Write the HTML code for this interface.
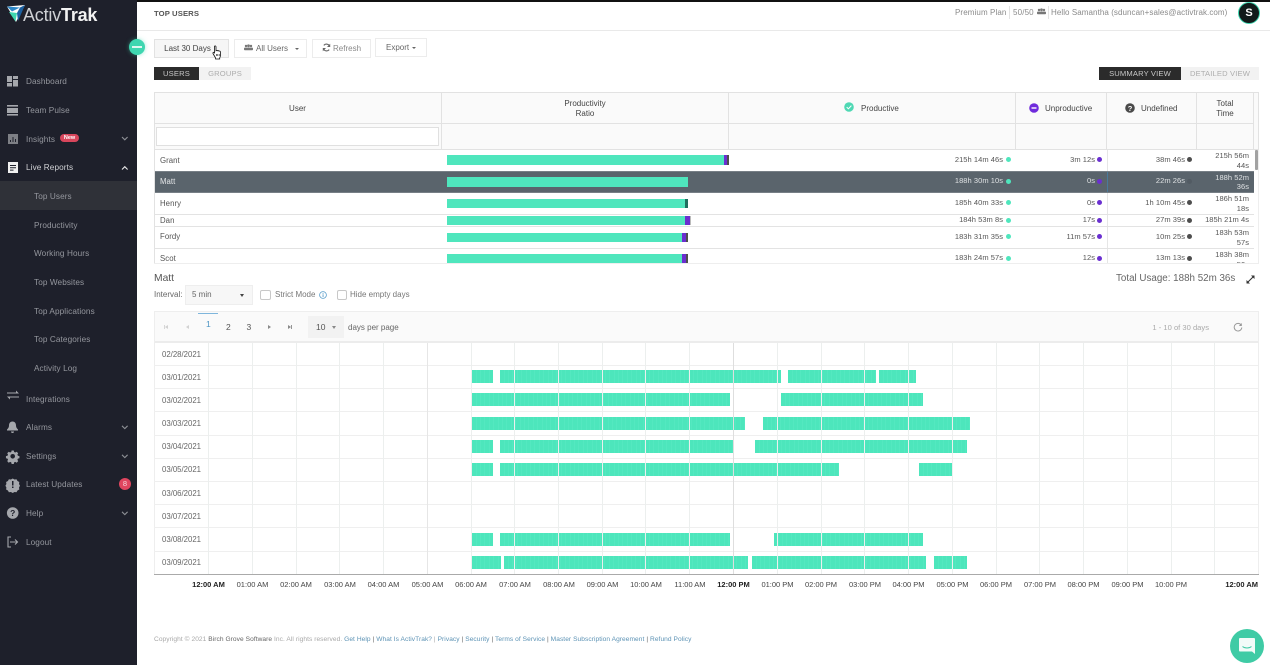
<!DOCTYPE html>
<html lang="en"><head><meta charset="utf-8"><title>Top Users</title>
<style>
html,body{margin:0;padding:0;width:1270px;height:665px;overflow:hidden;background:#fff}
body{font-family:"Liberation Sans",sans-serif;font-size:8px;color:#444;position:relative;filter:blur(.3px)}
div,span,a{position:absolute;white-space:nowrap;box-sizing:border-box}
span.i,a.i{position:static}
.c{text-align:center}
.side{left:0;top:0;width:137px;height:665px;background:#1e202b}
.n{left:26px;font-size:8.2px;color:#95979e;line-height:10px;letter-spacing:.1px}
.n2{left:34px}
.btn{height:19px;border:1px solid #ececec;background:#fff;line-height:17px;font-size:8px;color:#666;text-align:center}
.tab{height:13px;line-height:13px;font-size:7.6px;text-align:center;letter-spacing:.15px}
.hl{background:#e2e2e2}
.th{font-size:8px;color:#444;line-height:10px}
.cell{font-size:7.5px;color:#555;text-align:right;line-height:10px;letter-spacing:.05px}
.d{width:5px;height:5px;border-radius:50%}
.g{background:#4fe6bd}.p{background:#6a2fd0}.k{background:#4e4e4e}
.row{left:154px;width:1100px;height:1px;background:#e3e3e3}
.dt{left:162px;font-size:7.8px;color:#666;line-height:10px}
.rl{left:154px;width:1104px;height:1px;background:#efefef}
.b{height:13px;background:repeating-linear-gradient(90deg,#4de6bc 0 3.9px,#5ae9c4 3.9px 4.4px)}
.v{top:343px;width:1px;height:231px;background:#ecefee}
.t{width:60px;text-align:center;top:580px;font-size:7.5px;color:#444;line-height:10px}
.t b{color:#222}
.foot{left:154px;top:636px;font-size:6.6px;line-height:8px;color:#a8a8a8;letter-spacing:.06px}
.foot a.i{color:#5d93b5;text-decoration:none}
.foot span.i{color:#666}
.pg{font-size:8.5px;color:#555;line-height:10px}
</style></head>
<body>
<div style="left:0;top:0;width:1270px;height:1.5px;background:#111"></div>

<!-- sidebar -->
<div class="side"></div>
<svg style="position:absolute;left:0;top:0" width="137" height="665" viewBox="0 0 137 665">
<polygon points="7,6.5 25,5 16,22" fill="#fff"/>
<polygon points="7,6.5 20,7.5 12,11.5" fill="#2a86c8"/>
<polygon points="20,7.5 25,5 18,21 17,13" fill="#1a5fa0"/>
<polygon points="9,12 17,13 15.5,21.5" fill="#3ed6b0"/>
<g fill="#a5a7ac">
<rect x="7" y="76" width="5" height="6"/><rect x="13" y="76" width="5" height="3"/><rect x="13" y="80" width="5" height="6.500"/><rect x="7" y="83" width="5" height="3.500"/>
<rect x="7" y="105" width="11" height="1.600"/><rect x="7" y="108" width="11" height="5"/><rect x="7" y="114" width="11" height="1.600"/>
<path fill-rule="evenodd" d="M8 134h10v10H8zM10 140v2h1v-2zM12.500 137v5h1v-5zM15 139v3h1v-3z" fill="#7d7f85"/>
<path d="M7 392.500h9v-2l3 3h-12zM19 397.500h-9v2l-3-3h12z" />
<path d="M12.500 421.500c2.500 0 3.500 2 3.500 4 0 2 1 3 2 4v1h-11v-1c1-1 2-2 2-4 0-2 1-4 3.500-4zM11 431.500h3a1.500 1.500 0 0 1-3 0z"/>
<path d="M11.500 450.500h2.400l.4 1.700 1.300.6 1.500-.9 1.700 1.700-.9 1.500.6 1.300 1.700.4v2.400l-1.700.4-.6 1.300.9 1.500-1.700 1.700-1.500-.9-1.300.6-.4 1.700h-2.400l-.4-1.700-1.300-.6-1.500.9-1.700-1.700.9-1.500-.6-1.300-1.700-.4v-2.400l1.700-.4.6-1.300-.9-1.500 1.700-1.700 1.500.9 1.300-.6z" transform="translate(12.700 456.300) scale(.9) translate(-12.700 -457)"/>
<path d="M12.700 478.500l1.800 1 2-.3 1 1.800 1.800 1-.3 2 1 1.700-1 1.800.3 2-1.800 1-1 1.700-2-.2-1.800 1-1.800-1-2 .2-1-1.700-1.800-1 .3-2-1-1.800 1-1.700-.3-2 1.800-1 1-1.800 2 .3z"/>
<circle cx="12.700" cy="513" r="5.800"/>
</g>
<circle cx="12.700" cy="456.300" r="2.300" fill="#1e202b"/>
<rect x="12" y="481" width="1.500" height="4.500" fill="#1e202b"/><rect x="12" y="486.500" width="1.500" height="1.500" fill="#1e202b"/>
<text x="12.700" y="516" text-anchor="middle" font-family="Liberation Sans" font-size="8.500" font-weight="700" fill="#1e202b">?</text>
<path d="M11 537h-3v10h3" fill="none" stroke="#a5a7ac" stroke-width="1.100"/><path d="M10 542h7M15 539.500l2.500 2.500-2.500 2.500" fill="none" stroke="#a5a7ac" stroke-width="1.100"/>
<path fill-rule="evenodd" d="M8 162h10v11H8zM10 165v1h6v-1zM10 167.300v1h6v-1zM10 169.600v1h3.500v-1z" fill="#f0f0f0"/>
<g fill="none" stroke="#8e9096" stroke-width="1.100"><path d="M122 137l2.800 2.800 2.800-2.800M122 425.800l2.800 2.800 2.800-2.800M122 454.800l2.800 2.800 2.800-2.800M122 511.800l2.800 2.800 2.800-2.800"/><path d="M122 169.500l2.800-2.800 2.800 2.800" stroke="#e8e8e8"/></g>
</svg>
<div style="left:23px;top:4px;font-size:18px;line-height:22px;color:#cfd1d5;letter-spacing:-.2px">Activ<span class="i" style="font-weight:700;color:#f2f2f2">Trak</span></div>
<div style="left:0;top:181px;width:137px;height:29px;background:#2f3138"></div>
<div class="n" style="top:77px">Dashboard</div>
<div class="n" style="top:106px">Team Pulse</div>
<div class="n" style="top:135px">Insights</div>
<div style="left:60px;top:134px;width:19px;height:8px;border-radius:4px;background:#d8465c;color:#fff;font-size:5.500px;font-weight:700;line-height:8px;text-align:center">New</div>
<div class="n" style="top:163px;color:#d0d1d4">Live Reports</div>
<div class="n n2" style="top:192px">Top Users</div>
<div class="n n2" style="top:221px">Productivity</div>
<div class="n n2" style="top:249px">Working Hours</div>
<div class="n n2" style="top:278px">Top Websites</div>
<div class="n n2" style="top:307px">Top Applications</div>
<div class="n n2" style="top:335px">Top Categories</div>
<div class="n n2" style="top:364px">Activity Log</div>
<div class="n" style="top:395px">Integrations</div>
<div class="n" style="top:423px">Alarms</div>
<div class="n" style="top:452px">Settings</div>
<div class="n" style="top:480px">Latest Updates</div>
<div style="left:119px;top:478px;width:12px;height:12px;border-radius:50%;background:#e0455f;color:#f5d5da;font-size:7.500px;line-height:12px;text-align:center">8</div>
<div class="n" style="top:509px">Help</div>
<div class="n" style="top:538px">Logout</div>
<div style="left:129px;top:39px;width:16px;height:16px;border-radius:50%;background:#3ed6b0;box-shadow:0 0 4px rgba(62,214,176,.5)"></div>
<div style="left:132px;top:46px;width:10px;height:2px;background:#dff8f0"></div>

<!-- top bar -->
<div style="left:137px;top:30px;width:1133px;height:1px;background:#e9e9e9"></div>
<div style="left:154px;top:9px;font-size:7.700px;font-weight:700;line-height:10px;color:#555;letter-spacing:.1px">TOP USERS</div>
<div style="left:955px;top:8px;font-size:8px;line-height:10px;color:#8a8a8a;letter-spacing:.1px">Premium Plan</div>
<div style="left:1009px;top:6px;width:1px;height:13px;background:#e3e3e3"></div>
<div style="left:1013px;top:8px;font-size:8px;line-height:10px;color:#8a8a8a;letter-spacing:.15px">50/50</div>
<svg style="position:absolute;left:1037px;top:8px" width="9" height="7" viewBox="0 0 9 7"><g fill="#777"><circle cx="2" cy="2" r="1.200"/><circle cx="4.500" cy="1.800" r="1.400"/><circle cx="7" cy="2" r="1.200"/><rect x="0" y="3.600" width="9" height="2.600" rx=".8"/></g></svg>
<div style="left:1048px;top:6px;width:1px;height:13px;background:#e3e3e3"></div>
<div style="left:1051px;top:8px;font-size:8px;line-height:10px;color:#8a8a8a;letter-spacing:.07px">Hello Samantha (sduncan+sales@activtrak.com)</div>
<div style="left:1238px;top:2px;width:22px;height:22px;border-radius:50%;background:#111a1a;border:1px solid #3ed6b0;color:#fff;font-size:11px;font-weight:700;line-height:20px;text-align:center">S</div>

<!-- buttons -->
<div class="btn" style="left:154px;top:39px;width:75px;background:#f6f6f6;border-color:#e2e2e2;color:#444;padding-right:8px">Last 30 Days</div>
<div class="btn" style="left:234px;top:39px;width:73px;text-align:left;padding-left:21px">All Users</div>
<svg style="position:absolute;left:244px;top:44px" width="9" height="7" viewBox="0 0 9 7"><g fill="#777"><circle cx="2" cy="2" r="1.200"/><circle cx="4.500" cy="1.800" r="1.400"/><circle cx="7" cy="2" r="1.200"/><rect x="0" y="3.600" width="9" height="2.600" rx=".8"/></g></svg>
<div style="left:295px;top:48px;border:2px solid transparent;border-top:2.500px solid #666;border-bottom:0"></div>
<div class="btn" style="left:312px;top:39px;width:59px;text-align:left;padding-left:20px;color:#888">Refresh</div>
<svg style="position:absolute;left:322px;top:43px" width="9" height="9" viewBox="0 0 9 9"><path d="M7.700 3.500A3.400 3.400 0 0 0 1.800 2.400M1.300 5.500A3.400 3.400 0 0 0 7.200 6.600" fill="none" stroke="#666" stroke-width="1.100"/><path d="M8.200 .8v3.200h-3.200zM.8 8.200v-3.200h3.200z" fill="#666"/></svg>
<div class="btn" style="left:375px;top:38px;width:52px;text-align:left;padding-left:10px">Export</div>
<div style="left:412px;top:47px;border:2px solid transparent;border-top:2.500px solid #666;border-bottom:0"></div>
<svg style="position:absolute;left:212px;top:45px" width="10" height="15" viewBox="0 0 10 15"><path d="M2.500 1.200c.7-.6 1.500-.2 1.500.6v4l.5-.3c.5-.2 1 0 1.200.3.500-.3 1.100-.1 1.300.3.600-.2 1.300.1 1.400.8l.2 2.600c.1 1.500-.4 2.500-.9 3.500v1H3.600v-1L1 8.500c-.4-.8.400-1.500 1.100-1l.4.400z" fill="#fff" stroke="#111" stroke-width=".8"/><path d="M4.300 11V9M5.800 11V9M7.200 11V9" stroke="#111" stroke-width=".6"/></svg>

<!-- tabs -->
<div class="tab" style="left:154px;top:67px;width:45px;background:#2b2b2b;color:#c8c8c8">USERS</div>
<div class="tab" style="left:199px;top:67px;width:52px;background:#f2f2f2;color:#adadad">GROUPS</div>
<div class="tab" style="left:1099px;top:67px;width:82px;background:#2b2b2b;color:#c8c8c8">SUMMARY VIEW</div>
<div class="tab" style="left:1181px;top:67px;width:78px;background:#f2f2f2;color:#adadad">DETAILED VIEW</div>

<!-- table head -->
<div style="left:154px;top:92px;width:1105px;height:58px;background:#fafafa;border:1px solid #e2e2e2"></div>
<div class="hl" style="left:154px;top:123px;width:1100px;height:1px"></div>
<div class="hl" style="left:441px;top:92px;width:1px;height:58px"></div>
<div class="hl" style="left:728px;top:92px;width:1px;height:58px"></div>
<div class="hl" style="left:1015px;top:92px;width:1px;height:58px"></div>
<div class="hl" style="left:1106px;top:92px;width:1px;height:58px"></div>
<div class="hl" style="left:1196px;top:92px;width:1px;height:58px"></div>
<div class="hl" style="left:1253px;top:92px;width:1px;height:58px"></div>
<div style="left:156px;top:127px;width:283px;height:19px;background:#fff;border:1px solid #e0e0e0"></div>
<div class="th c" style="left:154px;top:104px;width:287px">User</div>
<div class="th c" style="left:441px;top:99px;width:288px;line-height:10px">Productivity<br>Ratio</div>
<div class="th" style="left:861px;top:104px">Productive</div>
<div class="th" style="left:1045px;top:104px">Unproductive</div>
<div class="th" style="left:1141px;top:104px">Undefined</div>
<div class="th c" style="left:1196px;top:99px;width:58px">Total<br>Time</div>
<svg style="position:absolute;left:844px;top:102px" width="10" height="10" viewBox="0 0 10 10"><circle cx="5" cy="5" r="4.800" fill="#4fd8b4"/><path d="M2.700 5.100l1.700 1.700 3-3.200" fill="none" stroke="#fff" stroke-width="1"/></svg>
<svg style="position:absolute;left:1029px;top:103px" width="10" height="10" viewBox="0 0 10 10"><circle cx="5" cy="5" r="4.800" fill="#6f2bdc"/><rect x="2.500" y="4.300" width="5" height="1.400" fill="#fff"/></svg>
<svg style="position:absolute;left:1125px;top:103px" width="10" height="10" viewBox="0 0 10 10"><circle cx="5" cy="5" r="4.800" fill="#4a4a4a"/><text x="5" y="7.800" text-anchor="middle" font-family="Liberation Sans" font-size="7.500" font-weight="700" fill="#fff">?</text></svg>

<!-- table rows -->
<div style="left:154px;top:150px;width:1px;height:113px;background:#e2e2e2"></div>
<div style="left:1258px;top:150px;width:1px;height:113px;background:#eeeeee"></div>
<div style="left:154px;top:263px;width:1105px;height:1px;background:#eeeeee"></div>
<div style="left:1107px;top:150px;width:1px;height:113px;background:#e6e6e6"></div>
<div class="row" style="top:214px"></div>
<div class="row" style="top:226px"></div>
<div class="row" style="top:248px"></div>
<div style="left:155px;top:171px;width:1099px;height:22px;background:#5a646c;border-top:1px solid #777f86;border-bottom:1px solid #777f86"></div>
<div style="left:1107px;top:172px;width:1px;height:20px;background:#4a7a9a"></div>
<div style="left:1255px;top:150px;width:3px;height:20px;background:#a2a2a2;border-radius:1px"></div>

<div class="cell" style="left:160px;top:156px;text-align:left;font-size:7.800px">Grant</div>
<div class="cell" style="left:160px;top:177px;text-align:left;color:#e4e6e8;font-size:7.800px">Matt</div>
<div class="cell" style="left:160px;top:199px;text-align:left;font-size:7.800px">Henry</div>
<div class="cell" style="left:160px;top:216px;text-align:left;font-size:7.800px">Dan</div>
<div class="cell" style="left:160px;top:232px;text-align:left;font-size:7.800px">Fordy</div>
<div class="cell" style="left:160px;top:254px;text-align:left;font-size:7.800px">Scot</div>

<div class="g" style="left:447px;top:155px;width:277px;height:10px"></div><div class="p" style="left:724px;top:155px;width:3px;height:10px"></div><div class="k" style="left:727px;top:155px;width:2px;height:10px"></div>
<div class="g" style="left:447px;top:177px;width:241px;height:10px"></div>
<div class="g" style="left:447px;top:199px;width:238px;height:9px"></div><div style="left:685px;top:199px;width:3px;height:9px;background:#1f6e5e"></div>
<div class="g" style="left:447px;top:216px;width:238px;height:9px"></div><div class="p" style="left:685px;top:216px;width:5px;height:9px"></div><div style="left:690px;top:216px;width:1px;height:9px;background:#bbb"></div>
<div class="g" style="left:447px;top:233px;width:235px;height:9px"></div><div class="p" style="left:682px;top:233px;width:4px;height:9px"></div><div class="k" style="left:686px;top:233px;width:2px;height:9px"></div>
<div class="g" style="left:447px;top:254px;width:235px;height:9px"></div><div class="p" style="left:682px;top:254px;width:4px;height:9px"></div><div class="k" style="left:686px;top:254px;width:2px;height:9px"></div>

<!-- productive -->
<div class="cell" style="left:903px;top:155px;width:100px">215h 14m 46s</div><div class="d g" style="left:1006px;top:157px"></div>
<div class="cell" style="left:903px;top:176px;width:100px;color:#dfe2e4">188h 30m 10s</div><div class="d g" style="left:1006px;top:179px"></div>
<div class="cell" style="left:903px;top:198px;width:100px">185h 40m 33s</div><div class="d g" style="left:1006px;top:200px"></div>
<div class="cell" style="left:903px;top:215px;width:100px">184h 53m 8s</div><div class="d g" style="left:1006px;top:217.500px"></div>
<div class="cell" style="left:903px;top:232px;width:100px">183h 31m 35s</div><div class="d g" style="left:1006px;top:234px"></div>
<div class="cell" style="left:903px;top:253px;width:100px">183h 24m 57s</div><div class="d g" style="left:1006px;top:255.500px"></div>
<!-- unproductive -->
<div class="cell" style="left:995px;top:155px;width:100px">3m 12s</div><div class="d p" style="left:1097px;top:157px"></div>
<div class="cell" style="left:995px;top:176px;width:100px;color:#dfe2e4">0s</div><div class="d p" style="left:1097px;top:179px"></div>
<div class="cell" style="left:995px;top:198px;width:100px">0s</div><div class="d p" style="left:1097px;top:200px"></div>
<div class="cell" style="left:995px;top:215px;width:100px">17s</div><div class="d p" style="left:1097px;top:217.500px"></div>
<div class="cell" style="left:995px;top:232px;width:100px">11m 57s</div><div class="d p" style="left:1097px;top:234px"></div>
<div class="cell" style="left:995px;top:253px;width:100px">12s</div><div class="d p" style="left:1097px;top:255.500px"></div>
<!-- undefined -->
<div class="cell" style="left:1085px;top:155px;width:100px">38m 46s</div><div class="d k" style="left:1187px;top:157px"></div>
<div class="cell" style="left:1085px;top:176px;width:100px;color:#dfe2e4">22m 26s</div><div class="d" style="left:1187px;top:179px;background:#525b63"></div>
<div class="cell" style="left:1085px;top:198px;width:100px">1h 10m 45s</div><div class="d k" style="left:1187px;top:200px"></div>
<div class="cell" style="left:1085px;top:215px;width:100px">27m 39s</div><div class="d k" style="left:1187px;top:217.500px"></div>
<div class="cell" style="left:1085px;top:232px;width:100px">10m 25s</div><div class="d k" style="left:1187px;top:234px"></div>
<div class="cell" style="left:1085px;top:253px;width:100px">13m 13s</div><div class="d k" style="left:1187px;top:255.500px"></div>
<!-- total -->
<div class="cell" style="left:1199px;top:151px;width:50px;line-height:9.500px">215h 56m<br>44s</div>
<div class="cell" style="left:1199px;top:172.500px;width:50px;line-height:9.500px;color:#dfe2e4">188h 52m<br>36s</div>
<div class="cell" style="left:1199px;top:194px;width:50px;line-height:9.500px">186h 51m<br>18s</div>
<div class="cell" style="left:1199px;top:215px;width:50px">185h 21m 4s</div>
<div class="cell" style="left:1199px;top:228px;width:50px;line-height:9.500px">183h 53m<br>57s</div>
<div style="left:1199px;top:250px;width:50px;height:13px;overflow:hidden"><div class="cell" style="left:0;top:0;width:50px;line-height:9.500px">183h 38m<br>50s</div></div>

<!-- detail -->
<div style="left:154px;top:273px;font-size:10.300px;line-height:12px;color:#555">Matt</div>
<div style="left:1116px;top:273px;font-size:9.800px;line-height:12px;color:#666">Total Usage: 188h 52m 36s</div>
<svg style="position:absolute;left:1246px;top:275px" width="9" height="9" viewBox="0 0 9 9"><path d="M1.500 7.500l6-6" stroke="#333" stroke-width="1.100"/><path d="M5 .5h3.500V4zM.5 5v3.500H4z" fill="#333"/></svg>
<div style="left:154px;top:290px;font-size:8px;line-height:10px;color:#666">Interval:</div>
<div style="left:185px;top:285px;width:68px;height:20px;background:#f7f7f7;border:1px solid #eeeeee;font-size:8px;line-height:18px;color:#666;padding-left:6px">5 min</div>
<div style="left:240px;top:294px;border:2.500px solid transparent;border-top:3px solid #444;border-bottom:0"></div>
<div style="left:260px;top:290px;width:11px;height:10px;border:1px solid #c8c8c8;border-radius:2px;background:#fff"></div>
<div style="left:275px;top:290px;font-size:8px;line-height:10px;color:#777">Strict Mode</div>
<svg style="position:absolute;left:319px;top:291px" width="8" height="8" viewBox="0 0 8 8"><circle cx="4" cy="4" r="3.400" fill="none" stroke="#5a9ecb" stroke-width=".8"/><rect x="3.600" y="3.300" width=".9" height="2.700" fill="#5a9ecb"/><rect x="3.600" y="1.900" width=".9" height=".9" fill="#5a9ecb"/></svg>
<div style="left:337px;top:290px;width:10px;height:10px;border:1px solid #c8c8c8;border-radius:2px;background:#fff"></div>
<div style="left:350px;top:290px;font-size:8px;line-height:10px;color:#777">Hide empty days</div>

<!-- pager -->
<div style="left:154px;top:311px;width:1105px;height:32px;background:#fafafa;border:1px solid #eeeeee;border-bottom:2px solid #ececec"></div>
<div style="left:198px;top:313px;width:20px;height:1px;background:#7fb6dc"></div>
<div class="pg" style="left:206px;top:319px;color:#4e95c4">1</div>
<div class="pg" style="left:226px;top:322px">2</div>
<div class="pg" style="left:246.500px;top:322px">3</div>
<svg style="position:absolute;left:160px;top:322px" width="135" height="9" viewBox="160 322 135 9"><g fill="#d2d2d2"><rect x="164" y="325" width=".9" height="4"/><path d="M168 325v4l-3-2zM189 325v4l-3-2z"/></g><g fill="#8a8a8a"><path d="M268 325v4l3-2zM288 325v4l3-2z"/><rect x="291" y="325" width=".9" height="4"/></g></svg>
<div style="left:308px;top:316px;width:36px;height:22px;background:#f2f2f2;font-size:8.500px;line-height:22px;color:#555;padding-left:8px">10</div>
<div style="left:332px;top:325.500px;border:2.500px solid transparent;border-top:3px solid #888;border-bottom:0"></div>
<div style="left:348px;top:323px;font-size:8px;line-height:10px;color:#666">days per page</div>
<div style="left:1100px;top:323px;width:109px;text-align:right;font-size:7.600px;line-height:10px;color:#aaa">1 - 10 of 30 days</div>
<svg style="position:absolute;left:1233px;top:322px" width="10" height="10" viewBox="0 0 10 10"><path d="M8.300 3.300A3.800 3.800 0 1 0 8.800 5.500" fill="none" stroke="#999" stroke-width="1"/><path d="M8.800 1v3h-3z" fill="#999"/></svg>

<!-- chart rows -->
<div style="left:154px;top:343px;width:1px;height:231px;background:#eeeeee"></div>
<div style="left:1258px;top:343px;width:1px;height:231px;background:#eeeeee"></div>
<div class="rl" style="top:365px"></div><div class="rl" style="top:388px"></div><div class="rl" style="top:411px"></div><div class="rl" style="top:435px"></div><div class="rl" style="top:458px"></div><div class="rl" style="top:481px"></div><div class="rl" style="top:504px"></div><div class="rl" style="top:527px"></div><div class="rl" style="top:551px"></div>
<div style="left:154px;top:574px;width:1105px;height:1px;background:#aaa"></div>
<div class="dt" style="top:350px">02/28/2021</div>
<div class="dt" style="top:373px">03/01/2021</div>
<div class="dt" style="top:396px">03/02/2021</div>
<div class="dt" style="top:419px">03/03/2021</div>
<div class="dt" style="top:442px">03/04/2021</div>
<div class="dt" style="top:465px">03/05/2021</div>
<div class="dt" style="top:489px">03/06/2021</div>
<div class="dt" style="top:512px">03/07/2021</div>
<div class="dt" style="top:535px">03/08/2021</div>
<div class="dt" style="top:558px">03/09/2021</div>

<!-- bars -->
<div class="b" style="left:472px;top:370px;width:21px"></div><div class="b" style="left:500px;top:370px;width:281px"></div><div class="b" style="left:788px;top:370px;width:88px"></div><div class="b" style="left:879px;top:370px;width:37px"></div>
<div class="b" style="left:472px;top:393px;width:258px"></div><div class="b" style="left:781px;top:393px;width:142px"></div>
<div class="b" style="left:472px;top:417px;width:273px"></div><div class="b" style="left:763px;top:417px;width:207px"></div>
<div class="b" style="left:472px;top:440px;width:21px"></div><div class="b" style="left:500px;top:440px;width:233px"></div><div class="b" style="left:755px;top:440px;width:212px"></div>
<div class="b" style="left:472px;top:463px;width:21px"></div><div class="b" style="left:500px;top:463px;width:339px"></div><div class="b" style="left:919px;top:463px;width:33px"></div>
<div class="b" style="left:472px;top:533px;width:21px"></div><div class="b" style="left:500px;top:533px;width:230px"></div><div class="b" style="left:774px;top:533px;width:149px"></div>
<div class="b" style="left:472px;top:556px;width:29px"></div><div class="b" style="left:504px;top:556px;width:244px"></div><div class="b" style="left:752px;top:556px;width:174px"></div><div class="b" style="left:934px;top:556px;width:33px"></div>
<!-- grid -->
<div class="v" style="left:208px"></div><div class="v" style="left:252px"></div><div class="v" style="left:296px"></div><div class="v" style="left:339px"></div><div class="v" style="left:383px"></div><div class="v" style="left:427px;background:#e6e6e6"></div><div class="v" style="left:471px"></div><div class="v" style="left:514px"></div><div class="v" style="left:558px"></div><div class="v" style="left:602px"></div><div class="v" style="left:645px"></div><div class="v" style="left:689px"></div><div class="v" style="left:733px;background:#dedede"></div><div class="v" style="left:777px"></div><div class="v" style="left:821px"></div><div class="v" style="left:864px"></div><div class="v" style="left:908px"></div><div class="v" style="left:952px"></div><div class="v" style="left:996px"></div><div class="v" style="left:1039px"></div><div class="v" style="left:1083px"></div><div class="v" style="left:1127px"></div><div class="v" style="left:1171px"></div><div class="v" style="left:1214px"></div>

<!-- axis -->
<div class="t" style="left:178.500px"><b>12:00 AM</b></div>
<div class="t" style="left:222.500px">01:00 AM</div>
<div class="t" style="left:266px">02:00 AM</div>
<div class="t" style="left:310px">03:00 AM</div>
<div class="t" style="left:353.500px">04:00 AM</div>
<div class="t" style="left:397.500px">05:00 AM</div>
<div class="t" style="left:441px">06:00 AM</div>
<div class="t" style="left:485px">07:00 AM</div>
<div class="t" style="left:529px">08:00 AM</div>
<div class="t" style="left:572.500px">09:00 AM</div>
<div class="t" style="left:616px">10:00 AM</div>
<div class="t" style="left:660px">11:00 AM</div>
<div class="t" style="left:703.500px"><b>12:00 PM</b></div>
<div class="t" style="left:747.500px">01:00 PM</div>
<div class="t" style="left:791px">02:00 PM</div>
<div class="t" style="left:835px">03:00 PM</div>
<div class="t" style="left:878.500px">04:00 PM</div>
<div class="t" style="left:922.500px">05:00 PM</div>
<div class="t" style="left:966px">06:00 PM</div>
<div class="t" style="left:1010px">07:00 PM</div>
<div class="t" style="left:1053.500px">08:00 PM</div>
<div class="t" style="left:1097.500px">09:00 PM</div>
<div class="t" style="left:1141px">10:00 PM</div>
<div class="t" style="left:1198px;text-align:right"><b>12:00 AM</b></div>

<!-- footer -->
<div class="foot">Copyright © 2021 <span class="i">Birch Grove Software</span> Inc. All rights reserved. <a class="i">Get Help</a> <span class="i">|</span> <a class="i">What Is ActivTrak?</a> | <a class="i">Privacy</a> <span class="i">|</span> <a class="i">Security</a> <span class="i">|</span> <a class="i">Terms of Service</a> <span class="i">|</span> <a class="i">Master Subscription Agreement</a> <span class="i">|</span> <a class="i">Refund Policy</a></div>

<!-- chat -->
<div style="left:1230px;top:629px;width:34px;height:34px;border-radius:50%;background:#3fcba5"></div>
<svg style="position:absolute;left:1238px;top:637px" width="18" height="18" viewBox="0 0 18 18"><path d="M2 1h14a1 1 0 0 1 1 1v15l-3-2.500H2a1 1 0 0 1-1-1V2a1 1 0 0 1 1-1z" fill="#f2fbf8"/><path d="M4.500 9.500c2.500 2 6.500 2 9 0" fill="none" stroke="#3fcba5" stroke-width="1"/></svg>
</body></html>
